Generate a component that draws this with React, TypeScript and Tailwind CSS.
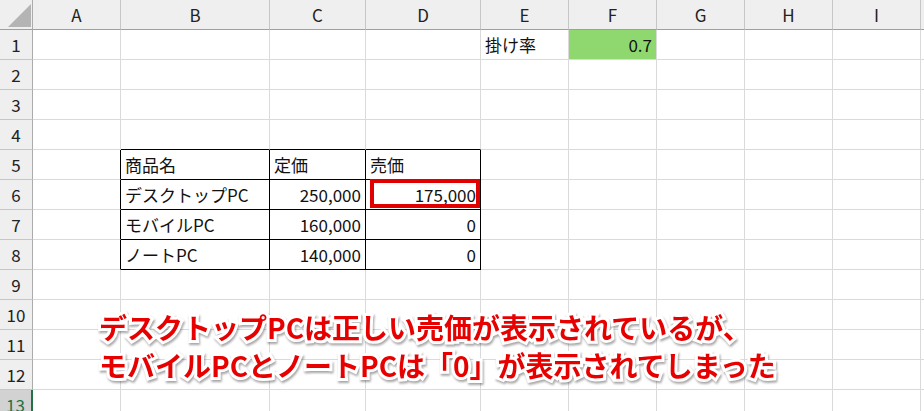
import React from "react";

const font = "font-['Noto_Sans_CJK_JP','Noto_Sans',sans-serif]";

const colNames = ["A", "B", "C", "D", "E", "F", "G", "H", "I", ""];

type CellDef = { text: string; align?: "left" | "right"; fill?: string };

const cells: Record<string, CellDef> = {
  E1: { text: "掛け率" },
  F1: { text: "0.7", align: "right", fill: "bg-[#8fd86f]" },
  B5: { text: "商品名" },
  C5: { text: "定価" },
  D5: { text: "売価" },
  B6: { text: "デスクトップPC" },
  C6: { text: "250,000", align: "right" },
  D6: { text: "175,000", align: "right" },
  B7: { text: "モバイルPC" },
  C7: { text: "160,000", align: "right" },
  D7: { text: "0", align: "right" },
  B8: { text: "ノートPC" },
  C8: { text: "140,000", align: "right" },
  D8: { text: "0", align: "right" },
};

// table B5:D8 gets black borders
const inTable = (c: number, r: number) => c >= 1 && c <= 3 && r >= 5 && r <= 8;

const Cell = ({ c, r }: { c: number; r: number }) => {
  const key = `${colNames[c]}${r}`;
  const def = cells[key];
  const rightBlack = inTable(c, r) || inTable(c + 1, r);
  const bottomBlack = inTable(c, r) || inTable(c, r + 1);
  return (
    <div
      className={`relative flex items-center h-[30px] border-r border-b px-[4px] text-[17px] text-[#111] whitespace-nowrap ${
        rightBlack ? "border-r-black" : "border-r-[#dadada]"
      } ${bottomBlack ? "border-b-black" : "border-b-[#dadada]"} ${
        def?.align === "right" ? "justify-end" : "justify-start"
      } ${def?.fill ?? "bg-white"}`}
    >
      {def?.text}
      {key === "D6" && (
        <div className="absolute left-[4px] right-0 top-[-1px] bottom-[1px] border-4 border-[#e00000]" />
      )}
    </div>
  );
};

export default function App() {
  const rows = Array.from({ length: 13 }, (_, i) => i + 1);
  return (
    <div className={`relative w-[924px] h-[411px] overflow-hidden bg-white ${font}`}>
      <div className="grid grid-cols-[33px_88px_149px_96px_115px_88px_88px_88px_88px_88px_1fr]">
        {/* header row */}
        <div className="relative h-[30px] bg-[#efefef] border-r border-b border-r-[#ababab] border-b-[#9f9f9f]">
          <svg className="absolute left-[8px] top-[4px]" width="23" height="23" viewBox="0 0 23 23">
            <polygon points="23,0 23,23 0,23" fill="#b4b4b4" />
          </svg>
        </div>
        {colNames.map((n, i) => (
          <div
            key={i}
            className="flex items-center justify-center h-[30px] bg-[#efefef] border-r border-b border-r-[#c6c6c6] border-b-[#9f9f9f] text-[17px] text-[#222]"
          >
            {n}
          </div>
        ))}

        {rows.map((r) => (
          <React.Fragment key={r}>
            <div
              className={`flex items-center justify-center h-[30px] border-b text-[17px] ${
                r === 13
                  ? "bg-[#d2d2d2] text-[#217346] border-r-2 border-r-[#217346] border-b-[#c6c6c6]"
                  : "bg-[#efefef] text-[#222] border-r border-r-[#ababab] border-b-[#c6c6c6]"
              }`}
            >
              {r}
            </div>
            {colNames.map((_, c) => (
              <Cell key={c} c={c} r={r} />
            ))}
          </React.Fragment>
        ))}
      </div>

      {/* annotation overlay */}
      <div className="absolute left-[99px] top-[308px] text-[28px] leading-[38px] font-bold text-[#e60000] whitespace-nowrap [paint-order:stroke_fill] [-webkit-text-stroke:6px_white] [filter:drop-shadow(1px_2px_1px_rgba(0,0,0,0.35))]">
        <div>デスクトップPCは正しい売価が表示されているが、</div>
        <div>モバイルPCとノートPCは「0」が表示されてしまった</div>
      </div>
    </div>
  );
}
